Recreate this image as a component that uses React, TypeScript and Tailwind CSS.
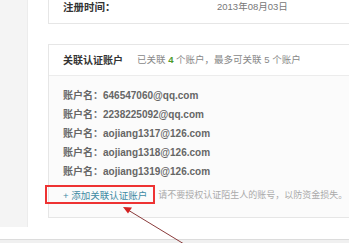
import React from 'react';

const accounts = [
  '646547060@qq.com',
  '2238225092@qq.com',
  'aojiang1317@126.com',
  'aojiang1318@126.com',
  'aojiang1319@126.com',
];

export default function App() {
  return (
    <div
      className="relative w-[349px] h-[243px] overflow-hidden bg-white"
      style={{ fontFamily: '"Liberation Sans", "Noto Sans CJK SC", sans-serif' }}
    >
      <div className="flex h-[239px]">
        <div className="w-[28px] h-[227px] shrink-0 bg-[#f4f4f4] border-r border-[#ececec]" />
        <div className="flex-1 pl-[20px]">
          {/* 基本信息卡片（上半部分在视窗外） */}
          <div className="h-[24px] border-l border-b border-[#e6e6e6] flex items-start pl-[14px]">
            <span className="w-[154px] text-[10.5px] leading-[14px] font-bold text-[#333]">注册时间：</span>
            <span className="text-[9.5px] leading-[14px] text-[#777]">2013年08月03日</span>
          </div>

          {/* 关联认证账户 */}
          <div className="mt-[20px] border-l border-t border-b border-[#e6e6e6]">
            <div className="h-[31px] border-b border-[#ececec] flex items-center pl-[14px] pt-[1px]">
              <span className="text-[10px] font-bold text-[#333]">关联认证账户</span>
              <span className="ml-[14px] text-[9.5px] text-[#888]">
                已关联 <b className="text-[#4c9a2a]">4</b> 个账户，最多可关联 5 个账户
              </span>
            </div>
            <div className="bg-[#fbfbfb] pl-[14px] pt-[10px] pb-[12px]">
              {accounts.map((a) => (
                <div key={a} className="text-[10px] leading-[19px] font-bold text-[#666]">
                  账户名：{a}
                </div>
              ))}
              <div className="mt-[5px] flex items-center leading-[19px]">
                <span className="text-[9.5px] text-[#3d8aa3]">+ 添加关联认证账户</span>
                <span className="ml-[11px] text-[9px] text-[#aaa]">请不要授权认证陌生人的账号，以防资金损失。</span>
              </div>
            </div>
          </div>
        </div>
      </div>
      <div className="h-[4px] border-t border-[#dcdcdc] bg-[#f0f0f0]" />

      {/* 标注：红框与箭头 */}
      <div className="absolute left-[45px] top-[185px] w-[110px] h-[19px] border-2 border-[#ee3333]" />
      <svg className="absolute left-0 top-0" width="349" height="243" viewBox="0 0 349 243">
        <line x1="184" y1="244" x2="128" y2="210" stroke="#8a3b3b" strokeWidth="1" />
        <polygon points="123,207 132,207.5 128,213.5" fill="#d42222" />
      </svg>
    </div>
  );
}
